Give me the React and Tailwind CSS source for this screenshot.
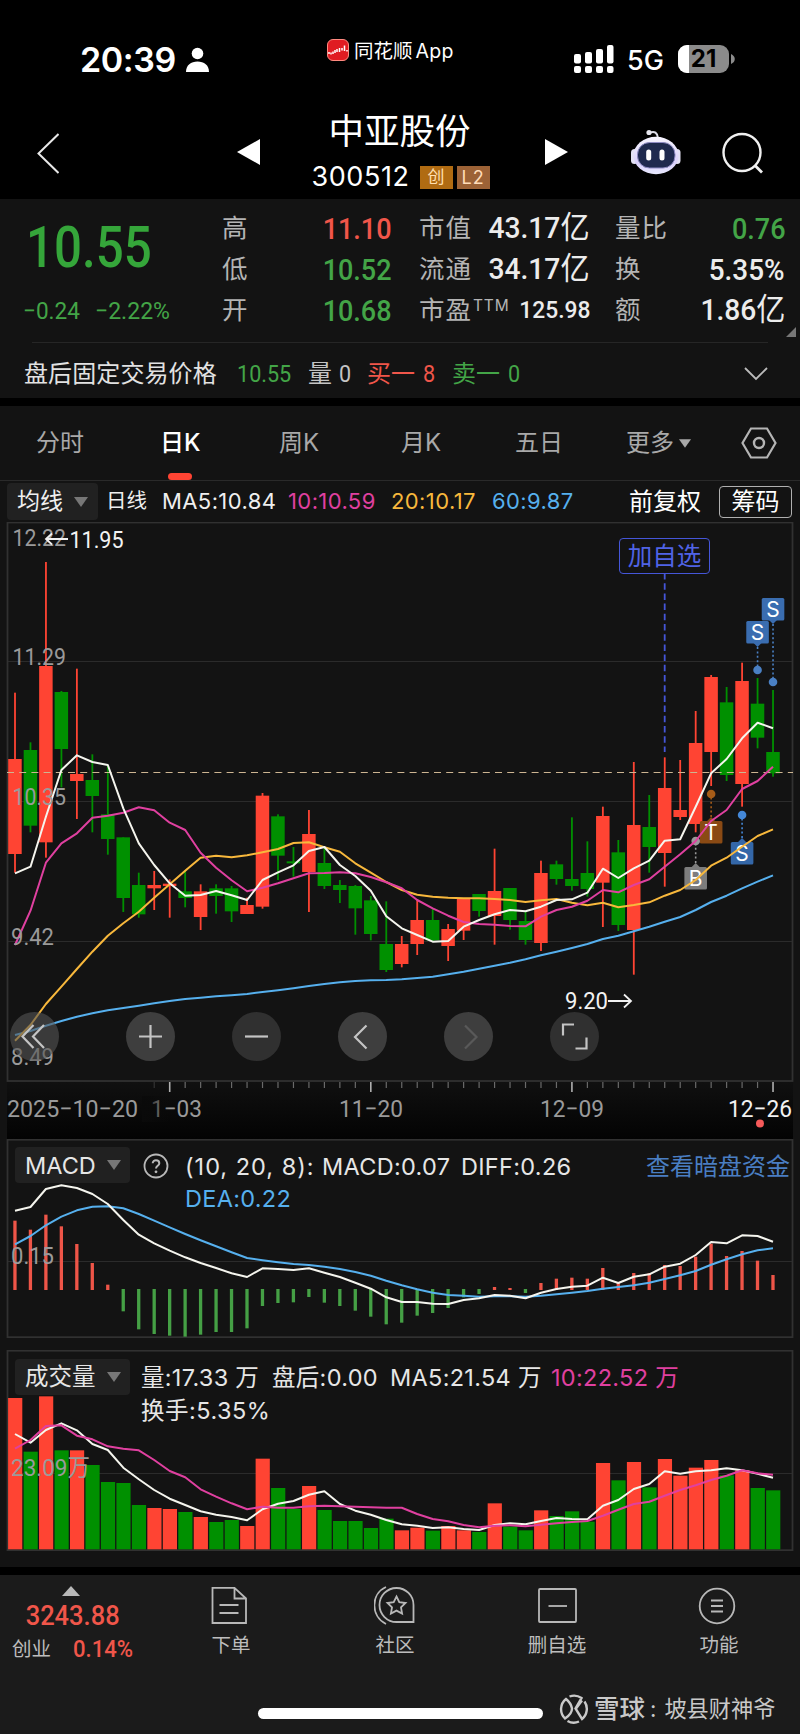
import React from "react";

const RED = "#ff4433";
const GREEN = "#009000";

const START_X = 15;
const STEP = 15.47;
const xOf = (i) => START_X + i * STEP;

// [up, body top, body bottom, wick top, wick bottom], a third of a pixel each
const candles = [
  [1, 267, 552, 68, 608], [0, 240, 467, 217, 487], [1, -12, 517, -324, 563], [0, 66, 237, 63, 352],
  [1, 312, 333, -4, 447], [0, 330, 378, 253, 487], [0, 433, 507, 285, 554], [0, 502, 684, 502, 726],
  [0, 645, 733, 608, 743], [1, 645, 655, 603, 720], [1, 641, 648, 628, 743], [0, 664, 684, 600, 712],
  [1, 664, 741, 643, 780], [0, 655, 678, 643, 731], [0, 655, 724, 648, 756], [1, 705, 732, 683, 732],
  [1, 377, 710, 369, 716], [0, 439, 557, 433, 630], [0, 574, 580, 531, 620], [1, 492, 606, 420, 726],
  [0, 579, 648, 531, 657], [0, 645, 660, 630, 699], [0, 648, 715, 645, 794], [0, 691, 792, 678, 811],
  [0, 822, 900, 694, 906], [1, 822, 882, 798, 892], [1, 750, 822, 690, 855], [0, 750, 811, 715, 815],
  [1, 777, 828, 762, 873], [1, 684, 782, 684, 810], [0, 672, 723, 672, 740], [1, 663, 738, 536, 824],
  [0, 654, 750, 654, 779], [0, 753, 810, 725, 824], [1, 609, 819, 572, 843], [0, 583, 627, 572, 644],
  [0, 627, 648, 442, 662], [0, 609, 657, 514, 680], [1, 438, 638, 410, 771], [0, 547, 765, 510, 783],
  [1, 465, 780, 276, 914], [0, 471, 531, 375, 608], [1, 354, 549, 262, 650], [1, 420, 441, 270, 450],
  [1, 219, 462, 123, 487], [1, 21, 246, 15, 348], [0, 97, 315, 51, 333], [1, 33, 342, -22, 410],
  [0, 101, 203, 24, 235], [0, 246, 310, 60, 320],
];

const ma5 = [610, 590, 440, 300, 256, 276, 285, 415, 520, 585, 640, 677, 675, 663, 676, 690, 630, 607, 586, 543, 531, 585, 618, 662, 739, 775, 795, 815, 813, 770, 750, 733, 720, 724, 710, 690, 688, 668, 596, 624, 595, 572, 512, 508, 410, 310, 267, 205, 158, 175];
const ma10 = [825, 722, 578, 520, 490, 443, 437, 428, 412, 421, 458, 480, 548, 593, 631, 664, 653, 640, 625, 610, 609, 607, 610, 621, 637, 655, 690, 715, 737, 756, 762, 764, 768, 769, 740, 720, 710, 692, 660, 667, 645, 628, 590, 553, 513, 453, 420, 357, 333, 290];
const ma20 = [1112, 1065, 1002, 950, 897, 845, 797, 760, 725, 683, 643, 602, 563, 557, 562, 556, 547, 537, 519, 517, 532, 545, 580, 608, 636, 660, 674, 680, 683, 685, 685, 687, 690, 696, 691, 687, 698, 706, 698, 712, 705, 697, 677, 660, 630, 587, 563, 530, 498, 478];
const ma60 = [1095, 1083, 1067, 1053, 1040, 1030, 1021, 1014, 1007, 1000, 993, 987, 983, 979, 976, 972, 966, 961, 955, 948, 942, 937, 933, 931, 930, 928, 924, 920, 913, 905, 896, 887, 878, 868, 856, 845, 834, 822, 807, 797, 784, 770, 755, 741, 720, 696, 677, 655, 635, 616];

const diff = [662, 651, 597, 586, 594, 612, 642, 690, 734, 760, 782, 802, 819, 834, 850, 861, 835, 837, 840, 835, 848, 861, 878, 896, 922, 936, 936, 941, 942, 930, 925, 915, 917, 925, 908, 897, 890, 887, 863, 879, 860, 853, 830, 821, 795, 756, 760, 736, 738, 755];
const dea = [763, 738, 706, 680, 661, 650, 649, 655, 672, 692, 712, 732, 751, 769, 787, 804, 811, 817, 822, 825, 830, 837, 846, 857, 872, 886, 898, 908, 915, 917, 920, 919, 919, 920, 917, 913, 908, 903, 896, 891, 886, 878, 867, 856, 843, 824, 808, 793, 781, 775];
const macd = [692, 719, 674, 709, 762, 819, 884, 964, 1018, 1032, 1037, 1040, 1034, 1026, 1026, 1015, 948, 939, 937, 921, 938, 948, 962, 980, 1003, 998, 977, 969, 954, 922, 912, 891, 894, 909, 879, 866, 863, 866, 834, 876, 849, 850, 825, 828, 800, 761, 798, 783, 812, 855];

const vol = [174, 335, 169, 331, 331, 375, 426, 429, 495, 504, 507, 516, 531, 546, 540, 558, 356, 444, 507, 438, 510, 543, 543, 564, 536, 571, 563, 572, 558, 571, 576, 490, 560, 571, 511, 528, 514, 545, 369, 421, 366, 442, 357, 407, 383, 360, 406, 391, 444, 451];
const vol5 = [282, 308, 270, 250, 271, 312, 330, 383, 418, 450, 476, 495, 514, 524, 531, 541, 508, 491, 483, 464, 454, 492, 512, 524, 540, 553, 557, 564, 562, 567, 570, 555, 550, 553, 543, 534, 537, 538, 497, 480, 447, 432, 394, 401, 394, 391, 385, 391, 401, 413];
const vol10 = [326, 300, 258, 256, 287, 298, 319, 326, 331, 360, 393, 412, 448, 470, 490, 508, 500, 503, 503, 499, 497, 499, 500, 502, 503, 503, 522, 537, 544, 555, 562, 557, 556, 559, 554, 550, 546, 543, 527, 509, 492, 485, 467, 450, 436, 420, 407, 391, 400, 404];

function Line({ data, base, color }) {
  const points = data.map((v, i) => `${xOf(i).toFixed(1)},${(base + v / 3).toFixed(1)}`).join(" ");
  return <polyline points={points} fill="none" stroke={color} strokeWidth="2" strokeLinejoin="round" />;
}

function Label({ x, y, w, size = 24, fill = "#9a9a9a", children }) {
  return (
    <text x={x} y={y} textLength={w} lengthAdjust="spacingAndGlyphs" fontSize={size} fill={fill} fontFamily="Roboto, 'Noto Sans CJK SC', sans-serif">
      {children}
    </text>
  );
}

// Condensed number, kept to the width of its column
function Num({ className = "", children }) {
  return <span className={`inline-block whitespace-nowrap font-[Roboto,'Noto_Sans_CJK_SC',sans-serif] ${className}`}>{children}</span>;
}

function Yi() {
  return <span className="text-[31px] font-normal">亿</span>;
}

function Caret({ className = "" }) {
  return (
    <svg className={className} width="14" height="10" viewBox="0 0 14 10">
      <path d="M0 0H14L7 10Z" fill="currentColor" />
    </svg>
  );
}

function StatusBar() {
  return (
    <div className="flex h-[100px] shrink-0 items-start pl-[80px] text-white">
      <span className="mt-[36px] w-[106px] text-[34px] font-semibold leading-[48px] tracking-[-0.4px]">20:39</span>
      <svg className="mt-[47px] shrink-0" width="23" height="26" viewBox="0 0 23 26">
        <circle cx="11.5" cy="6.5" r="5.8" fill="#fff" />
        <path d="M0 25C0 18 5 14.5 11.5 14.5S23 18 23 25Z" fill="#fff" />
      </svg>
      <svg className="ml-[118px] mt-[39px] shrink-0" width="22" height="22" viewBox="0 0 22 22">
        <rect x="0.5" y="0.5" width="21" height="21" rx="5.5" fill="#e01c22" stroke="#ff8a80" />
        <path d="M2 15V13M4 15.500V13.500M6 15V12.500M8 14V11M10 13V10M12.500 13V9M15 11.500V9M17.500 12V6.500M20 12.500V11" stroke="#fff" strokeWidth="1.500" />
      </svg>
      <span className="ml-[5px] mt-[36px] flex w-[220px] gap-[3px] whitespace-nowrap text-[19.5px] leading-[30px]">
        <span>同花顺</span>
        <span className="tracking-[0.3px]">App</span>
      </span>
      <svg className="mt-[45px] shrink-0" width="40" height="28" viewBox="0 0 40 28">
        <g fill="#fff">
          <rect x="0" y="9" width="7" height="9.500" rx="2" />
          <rect x="11" y="7" width="7" height="11.500" rx="2" />
          <rect x="22" y="4" width="7" height="14.500" rx="2" />
          <rect x="33" y="0" width="6.500" height="18.500" rx="2" />
          <rect x="0" y="21" width="7" height="7" rx="2" />
          <rect x="11" y="21" width="7" height="7" rx="2" />
          <rect x="22" y="21" width="7" height="7" rx="2" />
          <rect x="33" y="21" width="6.500" height="7" rx="2" />
        </g>
      </svg>
      <span className="ml-[13px] mt-[41px] w-[51px] text-[27px] font-medium leading-[40px]">5G</span>
      <div className="relative mt-[45px] flex h-[28px] w-[51px] items-center justify-center overflow-hidden rounded-[9px] bg-[#8b8b8b]">
        <div className="absolute inset-y-0 left-0 w-[11px] bg-white" />
        <span className="relative text-[24px] font-bold leading-[28px] text-black">21</span>
      </div>
      <svg className="ml-[2px] mt-[54px]" width="4" height="10" viewBox="0 0 4 10">
        <path d="M0 0C5 2 5 8 0 10Z" fill="#8b8b8b" />
      </svg>
    </div>
  );
}

function Robot() {
  return (
    <svg className="shrink-0" width="50" height="46" viewBox="0 0 50 46">
      <defs>
        <linearGradient id="head" x1="0" y1="0" x2="0" y2="1">
          <stop offset="0" stopColor="#f7f5ff" />
          <stop offset="0.700" stopColor="#d9d0fa" />
          <stop offset="1" stopColor="#e9eaff" />
        </linearGradient>
      </defs>
      <path d="M19 3.500Q26 1 27 9" fill="none" stroke="#dcdce8" strokeWidth="2" />
      <circle cx="18" cy="3.500" r="2.600" fill="#e6e6ee" />
      <rect x="0" y="20" width="7" height="15" rx="3.500" fill="#e4e2f4" />
      <rect x="42.500" y="20" width="7" height="15" rx="3.500" fill="#e4e2f4" />
      <ellipse cx="25" cy="26.500" rx="22.500" ry="18.800" fill="url(#head)" />
      <rect x="6.500" y="13.500" width="37.500" height="25.500" rx="12" fill="#1f2a4e" stroke="#8f8cc4" strokeWidth="1" />
      <rect x="15.200" y="20.500" width="5" height="11" rx="2.500" fill="#fff" />
      <rect x="28.500" y="20.500" width="5" height="11" rx="2.500" fill="#fff" />
    </svg>
  );
}

function NavBar() {
  return (
    <div className="flex h-[99px] shrink-0 items-start pl-[37px] text-white">
      <svg className="mt-[33px] shrink-0" width="22" height="41" viewBox="0 0 22 41">
        <path d="M21.500 1L1.500 20.500L21.500 40" fill="none" stroke="#e8e8e8" strokeWidth="2" />
      </svg>
      <svg className="ml-[178px] mt-[39px] shrink-0" width="23" height="26" viewBox="0 0 23 26">
        <path d="M23 0V26L0 13Z" fill="#fff" />
      </svg>
      <div className="ml-[25px] flex w-[260px] flex-col items-center pr-[31px]">
        <h1 className="mt-[8px] whitespace-nowrap text-[35.5px] leading-[48px]">中亚股份</h1>
        <div className="flex h-[42px] items-center whitespace-nowrap pl-[2px]">
          <span className="mr-[10px] text-[27px] leading-[40px] tracking-[0.6px]">300512</span>
          <span className="mr-1 mt-[1px] flex h-[23px] w-[33px] items-center justify-center bg-[#b06b12] text-[17px] text-[#ffdfae]">创</span>
          <span className="mt-[1px] flex h-[23px] w-[33px] items-center justify-center bg-[#9c6236] text-[18px] tracking-[1px] text-[#ffdcb8]">L2</span>
        </div>
      </div>
      <svg className="mt-[39px] shrink-0" width="23" height="26" viewBox="0 0 23 26">
        <path d="M0 0V26L23 13Z" fill="#fff" />
      </svg>
      <div className="ml-[63px] mt-[29px] flex">
        <Robot />
      </div>
      <svg className="ml-[41px] mt-[32px] shrink-0" width="42" height="42" viewBox="0 0 42 42">
        <circle cx="20" cy="20.500" r="18.500" fill="none" stroke="#f0f0f0" strokeWidth="2.400" />
        <path d="M33 33.500L40 40.500" stroke="#f0f0f0" strokeWidth="2.800" />
      </svg>
    </div>
  );
}

function Stat({ label, sup, children }) {
  return (
    <div className="flex h-[41px] items-center justify-between whitespace-nowrap">
      <span className="text-[25.5px] tracking-[1px] text-[#b4b4b4]">
        {label}
        {sup && <sup className="relative top-[-8px] ml-[1px] align-baseline text-[15.5px] tracking-[0.8px]">{sup}</sup>}
      </span>
      {children}
    </div>
  );
}

function Quote() {
  return (
    <div className="h-[199px] shrink-0 bg-[#131313]">
      <div className="flex h-[143px] pt-[9px]">
        <div className="w-[222px] shrink-0 pl-[26px] text-[#35a63a]">
          <Num className="mt-[6px] h-[66px] origin-left scale-x-[0.850] text-[58px] font-medium leading-[66px]">10.55</Num>
          <div className="mt-[8px] flex gap-[13px] text-[24px] leading-[46px] text-[#43a547]">
            <Num className="ml-[-3px] w-[59px] origin-left scale-x-[0.940]">−0.24</Num>
            <Num className="origin-left scale-x-[0.960]">−2.22%</Num>
          </div>
        </div>
        <div className="w-[170px] shrink-0">
          <Stat label="高"><Num className="origin-right scale-x-[0.9] text-[30px] font-medium text-[#f0564a]">11.10</Num></Stat>
          <Stat label="低"><Num className="origin-right scale-x-[0.9] text-[30px] font-medium text-[#43a547]">10.52</Num></Stat>
          <Stat label="开"><Num className="origin-right scale-x-[0.9] text-[30px] font-medium text-[#43a547]">10.68</Num></Stat>
        </div>
        <div className="ml-[27px] w-[171px] shrink-0 text-[#ececec]">
          <Stat label="市值"><Num className="origin-right scale-x-[0.940] text-[30px] font-medium">43.17<Yi /></Num></Stat>
          <Stat label="流通"><Num className="origin-right scale-x-[0.940] text-[30px] font-medium">34.17<Yi /></Num></Stat>
          <Stat label="市盈" sup="TTM"><Num className="origin-right scale-x-[0.930] text-[24.5px] font-medium">125.98</Num></Stat>
        </div>
        <div className="ml-[25px] w-[170px] shrink-0 text-[#ececec]">
          <Stat label="量比"><Num className="origin-right scale-x-[0.9] text-[30px] font-medium text-[#43a547]">0.76</Num></Stat>
          <Stat label="换"><Num className="origin-right scale-x-[0.930] text-[30px] font-medium">5.35%</Num></Stat>
          <Stat label="额"><Num className="origin-right scale-x-[0.940] text-[30px] font-medium">1.86<Yi /></Num></Stat>
        </div>
        <svg className="mt-[119px] shrink-0" width="11" height="10" viewBox="0 0 11 10">
          <path d="M11 0V10H1Z" fill="#777" />
        </svg>
      </div>
      <div className="mx-[32px] h-px bg-[#262626]" />
      <div className="flex h-[55px] items-center pl-[24px] pt-[7px] text-[24px] whitespace-nowrap">
        <span className="w-[213px] tracking-[0.1px] text-[#e2e2e2]">盘后固定交易价格</span>
        <Num className="w-[71px] origin-left scale-x-[0.9] text-[#43a547]">10.55</Num>
        <span className="w-[31px] text-[#c4c4c4]">量</span>
        <Num className="w-[28px] origin-left scale-x-[0.9] text-[#c4c4c4]">0</Num>
        <span className="w-[56px] text-[#f0564a]">买一</span>
        <Num className="w-[29px] origin-left scale-x-[0.9] text-[#f0564a]">8</Num>
        <span className="w-[56px] text-[#43a547]">卖一</span>
        <Num className="w-[236px] origin-left scale-x-[0.9] text-[#43a547]">0</Num>
        <svg width="24" height="14" viewBox="0 0 24 14">
          <path d="M1 1L12 12L23 1" fill="none" stroke="#bbb" strokeWidth="1.800" />
        </svg>
      </div>
    </div>
  );
}

function Tabs() {
  return (
    <div className="mt-2 flex h-[75px] shrink-0 items-start border-b border-[#2a2a2a] bg-[#131313] pl-[36px] text-[24px] leading-[74px] whitespace-nowrap text-[#a9a9a9]">
      <span className="w-[124px]">分时</span>
      <div className="relative w-[119px] font-medium text-white">
        日K
        <div className="absolute top-[67px] left-[8px] h-[7px] w-[24px] rounded-full bg-[#ff4433]" />
      </div>
      <span className="w-[122px]">周K</span>
      <span className="w-[114px]">月K</span>
      <span className="w-[111px]">五日</span>
      <span className="w-[53px]">更多</span>
      <Caret className="mt-[33px] h-[9px] w-[12px]" />
      <svg className="ml-[50px] mt-[21px]" width="36" height="32" viewBox="0 0 36 32">
        <path d="M10 1.500H26L34.500 16L26 30.500H10L1.500 16Z" fill="none" stroke="#b5b5b5" strokeWidth="2.200" />
        <circle cx="18" cy="16" r="5" fill="none" stroke="#b5b5b5" strokeWidth="2.400" />
      </svg>
    </div>
  );
}

function MaRow() {
  return (
    <div className="flex h-[41px] shrink-0 items-center pl-[7px] text-[22px] tracking-[0.4px] whitespace-nowrap text-[#efefef]">
      <div className="flex h-[37px] w-[91px] items-center rounded bg-[#212121] pl-[10px] text-[23px] tracking-normal">
        均线
        <Caret className="ml-[11px] text-[#777]" />
      </div>
      <span className="ml-[8px] w-[56px] text-[20.5px] tracking-normal">日线</span>
      <span className="w-[126px]">MA5:10.84</span>
      <span className="w-[103px] text-[#e040a0]">10:10.59</span>
      <span className="w-[101px] text-[#f8b83c]">20:10.17</span>
      <span className="w-[137px] text-[#56b0ee]">60:9.87</span>
      <span className="w-[90px] text-[24px] tracking-normal text-white">前复权</span>
      <span className="flex h-[32px] w-[73px] items-center justify-center rounded-[4px] border border-[#b0b0b0] text-[24px] tracking-normal text-white">筹码</span>
    </div>
  );
}

const pins = [
  { i: 48, top: 621, dot: 670, t: "S", bg: "#3a6db0", c: "#4a80c4", side: "up" },
  { i: 49, top: 598, dot: 682, t: "S", bg: "#3a6db0", c: "#4a80c4", side: "up" },
  { i: 45, top: 821, dot: 794, t: "T", bg: "#8a4a14", c: "#a65c18", side: "down" },
  { i: 44, top: 867, dot: 841, t: "B", bg: "#7d7d7d", c: "#999999", side: "down" },
  { i: 47, top: 842, dot: 815, t: "S", bg: "#3467a8", c: "#4488d8", side: "down" },
];

function Pin({ i, top, dot, t, bg, c, side }) {
  const x = xOf(i);
  const edge = side === "up" ? top + 22 : top;
  const tip = side === "up" ? edge + 4 : edge - 4;
  return (
    <g>
      <line x1={x} x2={x} y1={tip} y2={dot} stroke={c} strokeWidth="1.600" strokeDasharray="2 2.400" />
      <circle cx={x} cy={dot} r="4.300" fill={c} />
      <path d={`M${x - 4} ${edge}H${x + 4}L${x} ${tip}Z`} fill={bg} />
      <rect x={x - 11.3} y={top} width="22.600" height="22.600" rx="1.500" fill={bg} />
      <text x={x} y={top + 19} textAnchor="middle" fontSize="21" fill="#fff" fontFamily="Inter, sans-serif">{t}</text>
    </g>
  );
}

function RoundButton({ dark, children }) {
  return (
    <button className={`flex size-[49px] items-center justify-center rounded-full ${dark ? "bg-[#303030]" : "bg-[#3e3e3e]"}`}>
      <svg width="49" height="49" viewBox="0 0 49 49" fill="none" stroke="#c4c4c4" strokeWidth="2.200">
        {children}
      </svg>
    </button>
  );
}

function KChart() {
  return (
    <div className="relative h-[560px] shrink-0">
      <svg className="block" width="800" height="560" viewBox="0 522 800 560">
        <g stroke="#2b2b2b">
          <path d="M8 661.500H792M8 801.500H792M8 941.500H792" />
        </g>
        <rect x="7.500" y="522.500" width="785" height="558.500" fill="none" stroke="#313131" strokeWidth="1.800" />
        {candles.map(([up, top, bottom, high, low], i) => (
          <g key={i} fill={up ? RED : GREEN}>
            <rect x={xOf(i) - 0.9} y={670 + high / 3} width="1.800" height={(low - high) / 3} />
            <rect x={xOf(i) - 6.8} y={670 + top / 3} width="13.500" height={(bottom - top) / 3} />
          </g>
        ))}
        <path d="M7 772.500H793" stroke="#cdb592" strokeDasharray="7 5.200" />
        <path d="M664.700 573V752" stroke="#4556d8" strokeWidth="1.800" strokeDasharray="6.500 3.700" />
        {pins.map((p) => (
          <Pin key={p.i} {...p} />
        ))}
        <Line data={ma60} base={670} color="#56b0ee" />
        <Line data={ma20} base={670} color="#f8b83c" />
        <Line data={ma10} base={670} color="#e040a0" />
        <Line data={ma5} base={670} color="#f5f5ee" />
        <Label x="12.500" y="545.500" w="53.500">12.22</Label>
        <Label x="12.500" y="665" w="53.500">11.29</Label>
        <Label x="12.500" y="805" w="53.500">10.35</Label>
        <Label x="11" y="945" w="43">9.42</Label>
        <Label x="11" y="1065" w="43">8.49</Label>
        <Label x="69.500" y="547.500" w="54" fill="#f2f2f2">11.95</Label>
        <path d="M68 539H46M52 533.500L46 539L52 544.500" fill="none" stroke="#f2f2f2" strokeWidth="1.800" />
        <Label x="565" y="1009" w="43" fill="#f2f2f2">9.20</Label>
        <path d="M608 1001H631M624 994.500L631 1001L624 1007.500" fill="none" stroke="#f2f2f2" strokeWidth="1.800" />
      </svg>
      <div className="absolute top-[16px] left-[619px] flex h-[36px] w-[91px] items-center justify-center rounded-[4px] border border-[#4556d8] text-[24.500px] text-[#5063e6]">加自选</div>
      <div className="absolute top-[490px] left-[10px] flex gap-[57px]">
        <button className="flex size-[49px] items-center justify-center rounded-full bg-[#555]/60">
          <svg width="49" height="49" viewBox="0 0 49 49" fill="none" stroke="#c4c4c4" strokeWidth="2.200">
            <path d="M23.500 13L12.500 24.500L23.500 36M34 13L23 24.500L34 36" />
          </svg>
        </button>
        <div className="ml-[10px] flex gap-[57px]">
          <RoundButton><path d="M13 24.500H36M24.500 13V36" /></RoundButton>
          <RoundButton dark><path d="M13 24.500H36" /></RoundButton>
          <RoundButton><path d="M28.500 13.500L17 25L28.500 36.500" /></RoundButton>
          <RoundButton><path d="M21 13.500L32.500 25L21 36.500" stroke="#595959" /></RoundButton>
          <RoundButton dark><path d="M13 23.500V12.500H24M25.500 36.500H36.500V25.500" /></RoundButton>
        </div>
      </div>
    </div>
  );
}

function DateAxis() {
  const ticks = Array.from({ length: 41 }, (_, k) => k + 9);
  return (
    <svg className="block shrink-0" width="800" height="57" viewBox="0 1082 800 57">
      <defs>
        <linearGradient id="axis" x1="0" y1="0" x2="0" y2="1">
          <stop offset="0" stopColor="#101010" />
          <stop offset="1" stopColor="#030303" />
        </linearGradient>
        <linearGradient id="fade" x1="0" y1="0" x2="1" y2="0">
          <stop offset="0" stopColor="#0a0a0a" />
          <stop offset="1" stopColor="#0a0a0a" stopOpacity="0" />
        </linearGradient>
      </defs>
      <rect x="7" y="1082" width="786" height="57" fill="url(#axis)" />
      {ticks.map((i) => {
        const major = i === 10 || i === 23 || i === 36 || i === 49;
        return <line key={i} x1={xOf(i)} x2={xOf(i)} y1="1082" y2={major ? 1092 : 1088} stroke={i === 9 ? "#333" : major ? "#b0b0b0" : "#6a6a6a"} strokeWidth={major ? 1.6 : 1.2} />;
      })}
      <Label x="151" y="1117" w="51">1−03</Label>
      <rect x="142" y="1096" width="28" height="26" fill="url(#fade)" />
      <Label x="7" y="1117" w="131">2025−10−20</Label>
      <Label x="339" y="1117" w="64">11−20</Label>
      <Label x="540" y="1117" w="64">12−09</Label>
      <Label x="728" y="1117" w="64" fill="#f2f2f2">12−26</Label>
      <circle cx="760" cy="1123.500" r="4" fill="#f55a5a" />
    </svg>
  );
}

function Picker({ children }) {
  return (
    <div className="flex h-[36px] w-[115px] shrink-0 items-center justify-between rounded bg-[#212121] pr-[9px] pl-[10px] text-[23.500px] text-[#e6e6e6]">
      {children}
      <Caret className="text-[#777]" />
    </div>
  );
}

function MacdChart() {
  return (
    <div className="relative h-[199px] shrink-0">
      <svg className="block" width="800" height="199" viewBox="0 1139 800 199">
        <path d="M8 1261.500H792" stroke="#2b2b2b" />
        <rect x="7.500" y="1139.700" width="785" height="197.500" fill="none" stroke="#313131" strokeWidth="1.800" />
        {macd.map((v, i) => {
          const up = v < 897;
          const top = up ? v : 897;
          const bottom = up ? 900 : v;
          return <rect key={i} x={xOf(i) - 1.7} y={990 + top / 3} width="3.300" height={(bottom - top) / 3} fill={up ? "#ee5548" : "#45a045"} />;
        })}
        <Line data={dea} base={990} color="#56b0ee" />
        <Line data={diff} base={990} color="#f5f5ee" />
        <Label x="11" y="1264" w="43">0.15</Label>
      </svg>
      <div className="absolute top-[8px] left-[15px] flex w-[776px] items-start text-[23.500px] leading-[37px] whitespace-nowrap text-[#e6e6e6]">
        <Picker>MACD</Picker>
        <svg className="mt-[6px] ml-[13px] shrink-0" width="26" height="26" viewBox="0 0 26 26">
          <circle cx="13" cy="13" r="11.500" fill="none" stroke="#b8b8b8" strokeWidth="1.800" />
          <path d="M9.700 10.300C9.700 6 16.300 6.200 16.300 10.200C16.300 12.800 13 12.900 13 15.500" fill="none" stroke="#b8b8b8" strokeWidth="2" />
          <circle cx="13" cy="18.800" r="1.400" fill="#b8b8b8" />
        </svg>
        <div className="ml-[16px] w-[461px] leading-[34px] tracking-[0.300px]">
          <div className="flex pt-[3px]">
            <span className="w-[137px] tracking-[1px]">(10, 20, 8):</span>
            <span className="w-[139px]">MACD:0.07</span>
            <span>DIFF:0.26</span>
          </div>
          <div className="mt-[-2px] text-[#56b0ee]">DEA:0.22</div>
        </div>
        <a className="mt-px text-[24px] text-[#4a7ec2]">查看暗盘资金</a>
      </div>
    </div>
  );
}

function VolumeChart() {
  return (
    <div className="relative mt-[12px] h-[201px] shrink-0">
      <svg className="block" width="800" height="201" viewBox="0 1350 800 201">
        <path d="M8 1473.500H792" stroke="#2b2b2b" />
        <rect x="7.500" y="1350.700" width="785" height="199.500" fill="none" stroke="#313131" strokeWidth="1.800" />
        {vol.map((v, i) => (
          <rect key={i} x={xOf(i) - 6.9} y={1340 + v / 3} width="14.200" height={(628 - v) / 3} fill={candles[i][0] ? RED : GREEN} />
        ))}
        <Line data={vol5} base={1340} color="#f5f5ee" />
        <Line data={vol10} base={1340} color="#e040a0" />
        <Label x="11" y="1476" w="79">23.09万</Label>
      </svg>
      <div className="absolute top-[9px] left-[15px] flex items-start text-[23.500px] whitespace-nowrap text-[#e6e6e6]">
        <Picker>成交量</Picker>
        <div className="ml-[11px] leading-[34px] tracking-[0.300px]">
          <div className="flex pt-[2px]">
            <span className="w-[131px]">量:17.33 万</span>
            <span className="w-[118px]">盘后:0.00</span>
            <span className="w-[161px]">MA5:21.54 万</span>
            <span className="text-[#e040a0]">10:22.52 万</span>
          </div>
          <div className="mt-[-1px] tracking-[0.500px]">换手:5.35%</div>
        </div>
      </div>
    </div>
  );
}

function FooterItem({ className, label, children }) {
  return (
    <div className={`flex shrink-0 flex-col items-center text-[19.500px] leading-[28px] text-[#bdbdbd] ${className}`}>
      <svg className="mt-[11px] mb-[5px]" width="42" height="40" viewBox="0 0 42 40" fill="none" stroke="#b8b8b8" strokeWidth="1.800">
        {children}
      </svg>
      {label}
    </div>
  );
}

function Footer() {
  return (
    <div className="mt-4 flex grow flex-col border-t-8 border-black bg-[#1b1b1b]">
      <div className="flex h-[110px] shrink-0">
        <div className="flex w-[142px] shrink-0 flex-col items-center pt-[11px] text-[#f0564a]">
          <svg width="18" height="10" viewBox="0 0 18 10">
            <path d="M9 0L18 10H0Z" fill="#b8b8b8" />
          </svg>
          <Num className="ml-[3px] scale-x-[0.910] text-[28px] leading-[40px] font-medium">3243.88</Num>
          <div className="flex items-center pl-[3px] text-[24px] leading-[26px]">
            <span className="mr-[22px] text-[19.500px] text-[#bdbdbd]">创业</span>
            <Num className="w-[60px] origin-left scale-x-[0.920] font-medium">0.14%</Num>
          </div>
        </div>
        <FooterItem className="ml-[59px] w-[60px]" label="下单">
          <path d="M2.500 1.800H24.500L36 12.500V37H2.500ZM24.500 1.800V12.500H36M9.500 19H28.500M9.500 27H28.500" />
        </FooterItem>
        <FooterItem className="ml-[104px] w-[60px]" label="社区">
          <path d="M12 1C-3.500 8 -3.500 30 12 38M39.500 36V19A17 17 0 1 0 22.500 36Z" />
          <path d="M22.500 10.500L25.300 16.200L31.500 17L27 21.400L28.100 27.500L22.500 24.600L16.900 27.500L18 21.400L13.500 17L19.700 16.200Z" />
        </FooterItem>
        <FooterItem className="ml-[99px] w-[66px]" label="删自选">
          <rect x="3" y="3" width="37" height="33" rx="1" />
          <path d="M12.500 20H31" />
        </FooterItem>
        <FooterItem className="ml-[99px] w-[60px]" label="功能">
          <circle cx="19" cy="20" r="17.300" />
          <path d="M13 14.500H25M13 20H25M13 25.500H25" />
        </FooterItem>
      </div>
      <div className="flex items-center pt-[4px] pl-[258px]">
        <div className="mt-[8px] h-[11px] w-[285px] rounded-full bg-white" />
        <svg className="ml-[16px]" width="30" height="30" viewBox="0 0 30 30" fill="none" stroke="#c9c9c9" strokeWidth="2.400">
          <path d="M7 5A13 13 0 0 0 6 24.500Q13 20 13 14.500Q12 9 7 5ZM10.500 2.500A13 13 0 0 1 22.500 4L16.500 14.500L23 25A13 13 0 0 0 25.500 7.500M8.500 27A13 13 0 0 0 20 27.500M23 6.500L17 14.500" />
        </svg>
        <span className="ml-[5px] text-[25.500px] leading-[40px] font-medium text-[#c9c9c9]">雪球</span>
        <span className="ml-[5px] flex gap-[8px] text-[22.200px] leading-[40px] whitespace-nowrap text-[#c9c9c9]">
          <span>:</span>
          <span>坡县财神爷</span>
        </span>
      </div>
    </div>
  );
}

export default function App() {
  return (
    <div className="flex h-[1734px] w-[800px] flex-col overflow-hidden bg-[#131313] font-[Inter,'Noto_Sans_CJK_SC',sans-serif]">
      <div className="flex shrink-0 flex-col bg-black">
        <StatusBar />
        <NavBar />
        <Quote />
        <Tabs />
      </div>
      <MaRow />
      <KChart />
      <DateAxis />
      <MacdChart />
      <VolumeChart />
      <Footer />
    </div>
  );
}
